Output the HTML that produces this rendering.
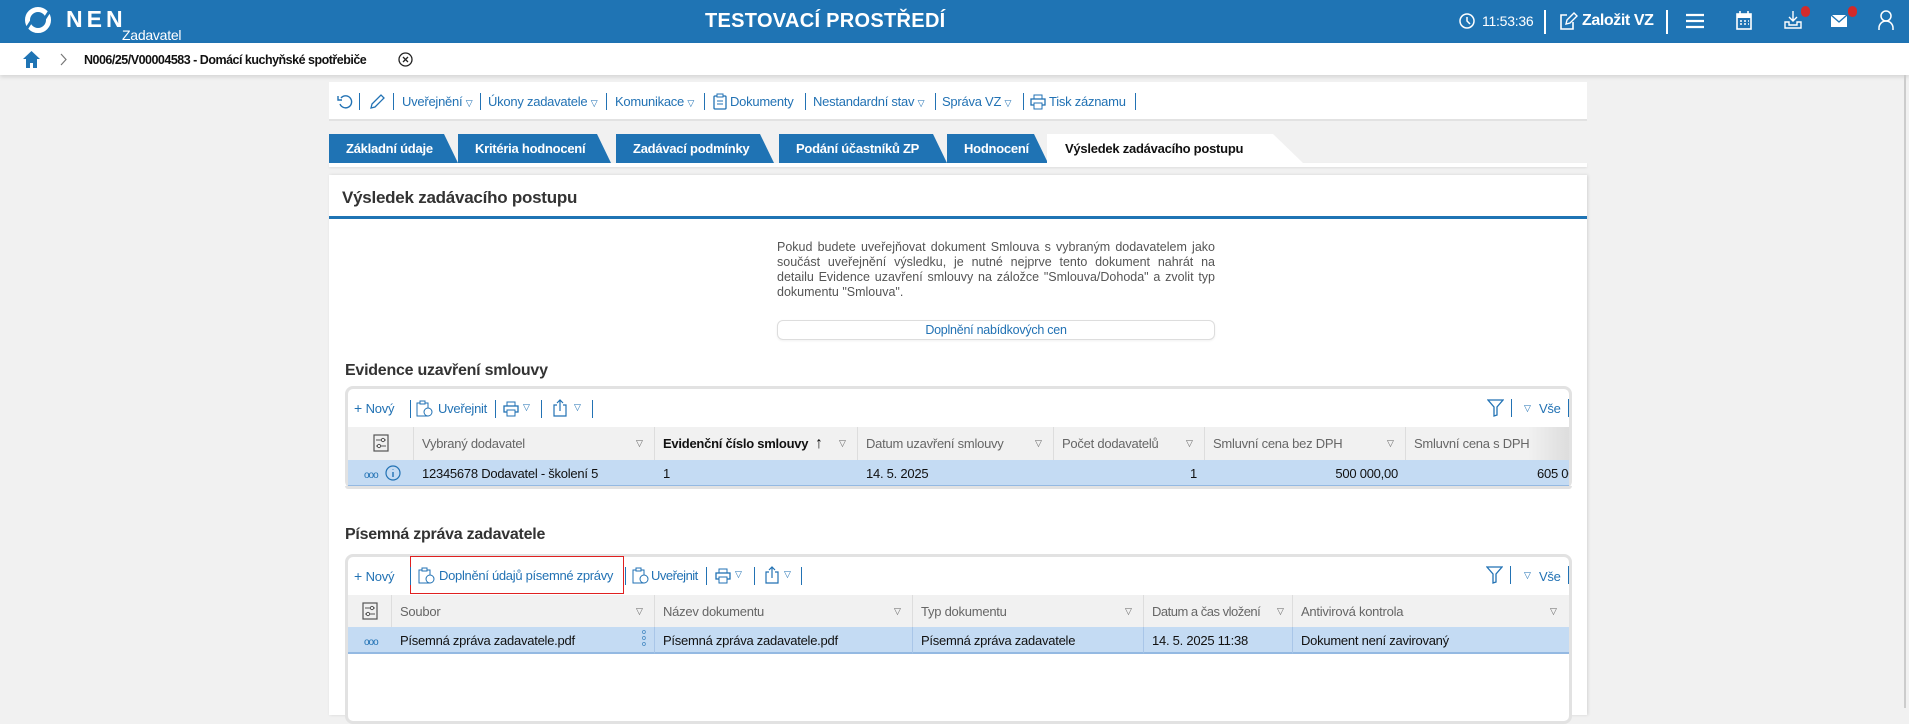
<!DOCTYPE html>
<html><head><meta charset="utf-8">
<style>
*{margin:0;padding:0;box-sizing:border-box}
body{width:1909px;height:708px;overflow:hidden;background:#f1f1f1;font-family:"Liberation Sans",Arial,sans-serif;font-size:13px;color:#222;position:relative;letter-spacing:-0.25px}
.a{position:absolute;white-space:nowrap}
.blue{color:#2272b4}
.sep{position:absolute;width:1px;background:#2272b4}
.tab{position:absolute;top:134px;height:29px;background:#1f73b4;color:#fff;font-weight:bold;font-size:13px;line-height:29px;padding-left:17px;clip-path:polygon(0 0,calc(100% - 14px) 0,100% 100%,0 100%);white-space:nowrap}
.hd{position:absolute;background:#f1f1f1;height:33px;border-right:1px solid #ddd;color:#666;font-size:13px;line-height:33px;padding-left:8px;white-space:nowrap}
.dr{position:absolute;background:#c4dbf3;height:27px;border-bottom:2px solid #94b9e2;border-right:1px solid #a9c6e8;font-size:13px;line-height:27px;padding-left:8px;color:#111;white-space:nowrap}
.tri{position:absolute;font-size:9px;color:#666}
</style></head><body>
<div class="a" style="left:0;top:0;width:1909px;height:43px;background:#1f74b4"></div>
<svg class="a" style="left:24px;top:6px" width="28" height="28" viewBox="0 0 28 28"><circle cx="14" cy="14" r="10.5" fill="none" stroke="#fff" stroke-width="5"/><path d="M3 22 L12 8 M16 20 L25 6" stroke="#1f74b4" stroke-width="3"/></svg>
<div class="a" style="left:66px;top:6px;color:#fff;font-weight:bold;font-size:23px;letter-spacing:4px">NEN</div>
<div class="a" style="left:122px;top:27px;color:#fff;font-size:14px">Zadavatel</div>
<div class="a" style="left:705px;top:10px;color:#fff;font-weight:bold;font-size:20px;letter-spacing:.3px">TESTOVACÍ PROSTŘEDÍ</div>
<svg class="a" style="left:1459px;top:13px" width="16" height="16"><circle cx="8" cy="8" r="7" fill="none" stroke="#fff" stroke-width="1.5"/><path d="M8 4v4l3 3" stroke="#fff" stroke-width="1.5" fill="none"/></svg>
<div class="a" style="left:1482px;top:13px;color:#fff;font-size:14px">11:53:36</div>
<div class="a" style="left:1544px;top:10px;width:2px;height:24px;background:#fff"></div>
<svg class="a" style="left:1558px;top:11px" width="20" height="20"><path d="M9 4H3v14h12v-7" fill="none" stroke="#fff" stroke-width="1.6"/><path d="M8 13l1-4 7-7 3 3-7 7z" fill="none" stroke="#fff" stroke-width="1.4"/></svg>
<div class="a" style="left:1582px;top:12px;color:#fff;font-weight:bold;font-size:16px;letter-spacing:-0.4px">Založit VZ</div>
<div class="a" style="left:1666px;top:10px;width:2px;height:24px;background:#fff"></div>
<svg class="a" style="left:1686px;top:13px" width="18" height="16"><path d="M0 2h18M0 8h18M0 14h18" stroke="#fff" stroke-width="2.2"/></svg>
<svg class="a" style="left:1736px;top:11px" width="16" height="19"><rect x="1" y="3" width="14" height="15" fill="none" stroke="#fff" stroke-width="1.6"/><rect x="1" y="3" width="14" height="4" fill="#fff"/><path d="M4 0v4M12 0v4M4 10h2M8 10h2M12 10h1M4 13h2M8 13h2M12 13h1" stroke="#fff" stroke-width="1.6"/></svg>
<svg class="a" style="left:1784px;top:11px" width="18" height="18"><path d="M9 0v10M5 6l4 4 4-4" stroke="#fff" stroke-width="1.4" fill="none"/><path d="M1 11v6h16v-6h-4v3H5v-3z" fill="none" stroke="#fff" stroke-width="1.4"/></svg>
<div class="a" style="left:1801px;top:6px;width:9px;height:11px;border-radius:5px;background:#d22a2a"></div>
<svg class="a" style="left:1830px;top:14px" width="18" height="14"><rect x="1" y="1" width="16" height="12" fill="#fff"/><path d="M1 1l8 7 8-7" stroke="#1f74b4" stroke-width="1.4" fill="none"/></svg>
<div class="a" style="left:1848px;top:6px;width:9px;height:11px;border-radius:5px;background:#d22a2a"></div>
<svg class="a" style="left:1878px;top:10px" width="16" height="20"><circle cx="8" cy="6" r="5" fill="none" stroke="#fff" stroke-width="1.5"/><path d="M1 20v-2a7 7 0 0 1 14 0v2" fill="none" stroke="#fff" stroke-width="1.5"/></svg>
<div class="a" style="left:0;top:43px;width:1909px;height:32px;background:#fff;box-shadow:0 2px 4px rgba(0,0,0,.12)"></div>
<svg class="a" style="left:23px;top:50px" width="17" height="18"><path d="M8.5 1L0 9h3v9h4v-5h3v5h4V9h3z" fill="#1f74b4"/></svg>
<svg class="a" style="left:60px;top:53px" width="8" height="13"><path d="M1 1l5 5.5L1 12" stroke="#777" fill="none" stroke-width="1.2"/></svg>
<div class="a" style="left:84px;top:53px;font-weight:bold;font-size:12.5px;color:#111;letter-spacing:-0.5px">N006/25/V00004583 - Domácí kuchyňské spotřebiče</div>
<svg class="a" style="left:398px;top:52px" width="15" height="15"><circle cx="7.5" cy="7.5" r="6.5" fill="none" stroke="#222" stroke-width="1.3"/><path d="M5 5l5 5M10 5l-5 5" stroke="#222" stroke-width="1.3"/></svg>
<div class="a" style="left:329px;top:82px;width:1258px;height:39px;background:#fff;border-bottom:2px solid #e2e2e2"></div>
<svg class="a" style="left:337px;top:94px" width="16" height="16"><path d="M4 4a6 6 0 1 1-1 6" fill="none" stroke="#2272b4" stroke-width="1.4"/><path d="M1 2v4h4" fill="none" stroke="#2272b4" stroke-width="1.4"/></svg>
<div class="sep" style="left:359px;top:93px;height:17px"></div>
<svg class="a" style="left:369px;top:93px" width="16" height="17"><path d="M2 15l1-4 9-9 3 3-9 9z" fill="none" stroke="#2272b4" stroke-width="1.3"/></svg>
<div class="sep" style="left:393px;top:93px;height:17px"></div>
<div class="a blue" style="left:402px;top:94px">Uveřejnění <span style="font-size:9px">▽</span></div>
<div class="sep" style="left:480px;top:93px;height:17px"></div>
<div class="a blue" style="left:488px;top:94px">Úkony zadavatele <span style="font-size:9px">▽</span></div>
<div class="sep" style="left:606px;top:93px;height:17px"></div>
<div class="a blue" style="left:615px;top:94px">Komunikace <span style="font-size:9px">▽</span></div>
<div class="sep" style="left:704px;top:93px;height:17px"></div>
<svg class="a" style="left:713px;top:93px" width="14" height="17"><rect x="1" y="3" width="12" height="13" rx="1" fill="none" stroke="#2272b4" stroke-width="1.3"/><rect x="4" y="1" width="6" height="3" fill="#fff" stroke="#2272b4"/><path d="M4 8h6M4 11h6" stroke="#2272b4"/></svg>
<div class="a blue" style="left:730px;top:94px">Dokumenty</div>
<div class="sep" style="left:805px;top:93px;height:17px"></div>
<div class="a blue" style="left:813px;top:94px">Nestandardní stav <span style="font-size:9px">▽</span></div>
<div class="sep" style="left:935px;top:93px;height:17px"></div>
<div class="a blue" style="left:942px;top:94px">Správa VZ <span style="font-size:9px">▽</span></div>
<div class="sep" style="left:1023px;top:93px;height:17px"></div>
<svg class="a" style="left:1030px;top:94px" width="16" height="16"><rect x="4" y="1" width="8" height="4" fill="none" stroke="#2272b4"/><rect x="1" y="5" width="14" height="6" fill="none" stroke="#2272b4" stroke-width="1.3"/><rect x="4" y="9" width="8" height="6" fill="#fff" stroke="#2272b4"/></svg>
<div class="a blue" style="left:1049px;top:94px">Tisk záznamu</div>
<div class="sep" style="left:1135px;top:93px;height:17px"></div>
<div class="a" style="left:329px;top:163px;width:1258px;height:4px;background:#fff;box-shadow:0 1px 2px rgba(0,0,0,.08)"></div>
<div class="tab" style="left:329px;width:129px">Základní údaje</div>
<div class="tab" style="left:458px;width:153px">Kritéria hodnocení</div>
<div class="tab" style="left:616px;width:158px">Zadávací podmínky</div>
<div class="tab" style="left:779px;width:168px">Podání účastníků ZP</div>
<div class="tab" style="left:947px;width:101px">Hodnocení</div>
<div class="a" style="left:1047px;top:134px;width:256px;height:29px;background:#fff;clip-path:polygon(0 0,calc(100% - 30px) 0,100% 100%,0 100%);font-weight:bold;font-size:13px;line-height:29px;padding-left:18px;color:#111">Výsledek zadávacího postupu</div>
<div class="a" style="left:329px;top:175px;width:1258px;height:540px;background:#fff;box-shadow:1px 0 3px rgba(0,0,0,.12)"></div>
<div class="a" style="left:342px;top:188px;font-weight:bold;font-size:17px;color:#333">Výsledek zadávacího postupu</div>
<div class="a" style="left:329px;top:216px;width:1258px;height:3px;background:#1f74b4"></div>
<div class="a" style="left:777px;top:240px;width:438px;white-space:normal;text-align:justify;text-align-last:left;font-size:12.5px;line-height:15px;color:#555;letter-spacing:0">Pokud budete uveřejňovat dokument Smlouva s vybraným dodavatelem jako součást uveřejnění výsledku, je nutné nejprve tento dokument nahrát na detailu Evidence uzavření smlouvy na záložce "Smlouva/Dohoda" a zvolit typ dokumentu "Smlouva".</div>
<div class="a blue" style="left:777px;top:320px;width:438px;height:20px;border:1px solid #ddd;border-radius:6px;text-align:center;line-height:18px;font-size:12.5px;box-shadow:0 1px 2px rgba(0,0,0,.06)">Doplnění nabídkových cen</div>
<div class="a" style="left:345px;top:362px;font-weight:bold;font-size:16px;color:#333">Evidence uzavření smlouvy</div>
<div class="a" style="left:345px;top:386px;width:1227px;height:103px;border:3px solid #e2e2e2;border-radius:8px;overflow:hidden;background:#fff"></div>
<div class="a blue" style="left:354px;top:400px;font-size:14px">+ <span style="font-size:13px">Nový</span></div>
<div class="sep" style="left:410px;top:400px;height:18px"></div>
<svg class="a" style="left:416px;top:400px" width="18" height="18"><rect x="1" y="3" width="11" height="13" fill="none" stroke="#2272b4"/><rect x="4" y="1" width="5" height="3" fill="#fff" stroke="#2272b4"/><circle cx="12" cy="12" r="4" fill="#fff" stroke="#2272b4"/></svg>
<div class="a blue" style="left:438px;top:401px">Uveřejnit</div>
<div class="sep" style="left:495px;top:400px;height:18px"></div>
<svg class="a" style="left:503px;top:401px" width="16" height="16"><rect x="4" y="1" width="8" height="4" fill="none" stroke="#2272b4"/><rect x="1" y="5" width="14" height="6" fill="none" stroke="#2272b4" stroke-width="1.3"/><rect x="4" y="9" width="8" height="6" fill="#fff" stroke="#2272b4"/></svg>
<div class="a blue" style="left:523px;top:402px;font-size:9px">▽</div>
<div class="sep" style="left:541px;top:400px;height:18px"></div>
<svg class="a" style="left:553px;top:399px" width="14" height="18"><path d="M4 6H1v11h12V6h-3M7 12V1M4 4l3-3 3 3" fill="none" stroke="#2272b4" stroke-width="1.2"/></svg>
<div class="a blue" style="left:574px;top:402px;font-size:9px">▽</div>
<div class="sep" style="left:592px;top:400px;height:18px"></div>
<svg class="a" style="left:1487px;top:399px" width="17" height="18"><path d="M1 1h15l-6 7v8l-3 1V8z" fill="none" stroke="#2272b4" stroke-width="1.3"/></svg>
<div class="sep" style="left:1511px;top:399px;height:18px"></div>
<div class="a blue" style="left:1524px;top:403px;font-size:9px">▽</div>
<div class="a blue" style="left:1539px;top:401px">Vše</div>
<div class="sep" style="left:1568px;top:399px;height:18px"></div>
<div class="hd" style="left:348px;top:427px;width:66px"></div>
<svg class="a" style="left:373px;top:434px" width="16" height="18"><rect x="1" y="1" width="14" height="16" fill="none" stroke="#555" stroke-width="1.2"/><path d="M3 6h10M3 12h10" stroke="#555"/><circle cx="10" cy="6" r="1.6" fill="#fff" stroke="#555"/><circle cx="6" cy="12" r="1.6" fill="#fff" stroke="#555"/></svg>
<div class="hd" style="left:414px;top:427px;width:241px">Vybraný dodavatel<span class="tri" style="left:222px">▽</span></div>
<div class="hd" style="left:655px;top:427px;width:203px;font-weight:bold;color:#111">Evidenční číslo smlouvy&nbsp; <span style="font-size:16px;font-weight:normal">↑</span><span class="tri" style="left:184px;font-weight:normal">▽</span></div>
<div class="hd" style="left:858px;top:427px;width:196px">Datum uzavření smlouvy<span class="tri" style="left:177px">▽</span></div>
<div class="hd" style="left:1054px;top:427px;width:151px">Počet dodavatelů<span class="tri" style="left:132px">▽</span></div>
<div class="hd" style="left:1205px;top:427px;width:201px">Smluvní cena bez DPH<span class="tri" style="left:182px">▽</span></div>
<div class="hd" style="left:1406px;top:427px;width:163px;border-right:0;background:linear-gradient(90deg,#f1f1f1 75%,#ddd)">Smluvní cena s DPH</div>
<div class="dr" style="left:348px;top:460px;width:66px;border-right:0;color:#2272b4"><span style="font-size:10px;letter-spacing:-1px;margin-left:8px">ooo</span></div>
<svg class="a" style="left:385px;top:465px" width="16" height="16"><circle cx="8" cy="8" r="7" fill="none" stroke="#2272b4" stroke-width="1.2"/><path d="M8 7v5M8 4.5v.5" stroke="#2272b4" stroke-width="1.4"/></svg>
<div class="dr" style="left:414px;top:460px;width:241px;border-right:0">12345678 Dodavatel - školení 5</div>
<div class="dr" style="left:655px;top:460px;width:203px;border-right:0">1</div>
<div class="dr" style="left:858px;top:460px;width:196px;border-right:0">14. 5. 2025</div>
<div class="dr" style="left:1054px;top:460px;width:151px;border-right:0;text-align:right;padding-right:8px">1</div>
<div class="dr" style="left:1205px;top:460px;width:201px;border-right:0;text-align:right;padding-right:8px">500 000,00</div>
<div class="dr" style="left:1406px;top:460px;width:163px;border-right:0;overflow:hidden;padding-left:131px">605 000,00</div>
<div class="a" style="left:345px;top:486px;width:1227px;height:3px;background:#e2e2e2;border-radius:0 0 8px 8px"></div>
<div class="a" style="left:345px;top:526px;font-weight:bold;font-size:16px;color:#333">Písemná zpráva zadavatele</div>
<div class="a" style="left:345px;top:554px;width:1227px;height:170px;border:3px solid #e2e2e2;border-radius:8px;background:#fff"></div>
<div class="a" style="left:410px;top:556px;width:214px;height:38px;border:1px solid #e02020"></div>
<div class="a blue" style="left:354px;top:568px;font-size:14px">+ <span style="font-size:13px">Nový</span></div>
<div class="sep" style="left:410px;top:567px;height:18px"></div>
<svg class="a" style="left:418px;top:567px" width="18" height="18"><rect x="1" y="3" width="11" height="13" fill="none" stroke="#2272b4"/><rect x="4" y="1" width="5" height="3" fill="#fff" stroke="#2272b4"/><circle cx="12" cy="12" r="4" fill="#fff" stroke="#2272b4"/></svg>
<div class="a blue" style="left:439px;top:568px;letter-spacing:-0.3px">Doplnění údajů písemné zprávy</div>
<div class="sep" style="left:625px;top:567px;height:18px"></div>
<svg class="a" style="left:632px;top:567px" width="18" height="18"><rect x="1" y="3" width="11" height="13" fill="none" stroke="#2272b4"/><rect x="4" y="1" width="5" height="3" fill="#fff" stroke="#2272b4"/><circle cx="12" cy="12" r="4" fill="#fff" stroke="#2272b4"/></svg>
<div class="a blue" style="left:651px;top:568px;letter-spacing:-0.5px">Uveřejnit</div>
<div class="sep" style="left:706px;top:567px;height:18px"></div>
<svg class="a" style="left:715px;top:568px" width="16" height="16"><rect x="4" y="1" width="8" height="4" fill="none" stroke="#2272b4"/><rect x="1" y="5" width="14" height="6" fill="none" stroke="#2272b4" stroke-width="1.3"/><rect x="4" y="9" width="8" height="6" fill="#fff" stroke="#2272b4"/></svg>
<div class="a blue" style="left:735px;top:569px;font-size:9px">▽</div>
<div class="sep" style="left:754px;top:567px;height:18px"></div>
<svg class="a" style="left:765px;top:566px" width="14" height="18"><path d="M4 6H1v11h12V6h-3M7 12V1M4 4l3-3 3 3" fill="none" stroke="#2272b4" stroke-width="1.2"/></svg>
<div class="a blue" style="left:784px;top:569px;font-size:9px">▽</div>
<div class="sep" style="left:801px;top:567px;height:18px"></div>
<svg class="a" style="left:1486px;top:566px" width="17" height="18"><path d="M1 1h15l-6 7v8l-3 1V8z" fill="none" stroke="#2272b4" stroke-width="1.3"/></svg>
<div class="sep" style="left:1510px;top:566px;height:18px"></div>
<div class="a blue" style="left:1524px;top:570px;font-size:9px">▽</div>
<div class="a blue" style="left:1539px;top:569px">Vše</div>
<div class="sep" style="left:1568px;top:566px;height:18px"></div>
<div class="hd" style="left:348px;top:595px;width:44px"></div>
<svg class="a" style="left:362px;top:602px" width="16" height="18"><rect x="1" y="1" width="14" height="16" fill="none" stroke="#555" stroke-width="1.2"/><path d="M3 6h10M3 12h10" stroke="#555"/><circle cx="10" cy="6" r="1.6" fill="#fff" stroke="#555"/><circle cx="6" cy="12" r="1.6" fill="#fff" stroke="#555"/></svg>
<div class="hd" style="left:392px;top:595px;width:263px">Soubor<span class="tri" style="left:244px">▽</span></div>
<div class="hd" style="left:655px;top:595px;width:258px">Název dokumentu<span class="tri" style="left:239px">▽</span></div>
<div class="hd" style="left:913px;top:595px;width:231px">Typ dokumentu<span class="tri" style="left:212px">▽</span></div>
<div class="hd" style="left:1144px;top:595px;width:149px;letter-spacing:-0.5px">Datum a čas vložení<span class="tri" style="left:133px">▽</span></div>
<div class="hd" style="left:1293px;top:595px;width:276px;border-right:0">Antivirová kontrola<span class="tri" style="left:257px">▽</span></div>
<div class="dr" style="left:348px;top:627px;width:44px;border-right:0;color:#2272b4"><span style="font-size:10px;letter-spacing:-1px;margin-left:8px">ooo</span></div>
<div class="dr" style="left:392px;top:627px;width:263px">Písemná zpráva zadavatele.pdf<span class="a" style="left:250px;top:3px;font-size:7px;line-height:6px;color:#2272b4;white-space:normal;width:6px">o<br>o<br>o</span></div>
<div class="dr" style="left:655px;top:627px;width:258px">Písemná zpráva zadavatele.pdf</div>
<div class="dr" style="left:913px;top:627px;width:231px">Písemná zpráva zadavatele</div>
<div class="dr" style="left:1144px;top:627px;width:149px">14. 5. 2025 11:38</div>
<div class="dr" style="left:1293px;top:627px;width:276px;border-right:0">Dokument není zavirovaný</div>
<div class="a" style="left:1904px;top:75px;width:2px;height:633px;background:#ccc"></div>
</body></html>
